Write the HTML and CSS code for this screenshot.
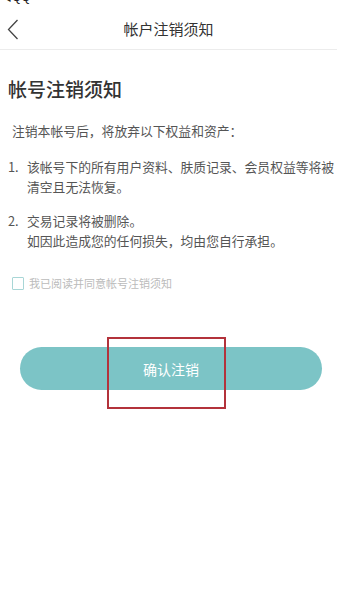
FILE: index.html
```html
<!DOCTYPE html>
<html lang="zh-CN">

<head>
    <meta charset="UTF-8">
    <meta name="viewport" content="width=device-width, initial-scale=1">
    <title>帐户注销须知</title>
    <link rel="stylesheet" href="styles.css">
</head>

<body>
    <div class="status-bar"><span class="status-back">◀QQ</span></div>

    <header class="nav">
        <a class="nav-back" href="#">
            <svg width="12" height="21" viewBox="0 0 12 21">
                <polyline points="10.5,1 1.5,10.5 10.5,20" fill="none" stroke="#444" stroke-width="1.3" />
            </svg>
        </a>
        <h1 class="nav-title">帐户注销须知</h1>
    </header>

    <main class="content">
        <h2 class="notice-title">帐号注销须知</h2>
        <p class="notice-intro">注销本帐号后，将放弃以下权益和资产：</p>

        <ol class="notice-list">
            <li class="notice-item">
                <span class="item-no">1.</span>
                <span class="item-text">该帐号下的所有用户资料、肤质记录、会员权益等将被清空且无法恢复。</span>
            </li>
            <li class="notice-item">
                <span class="item-no">2.</span>
                <span class="item-text">交易记录将被删除。<br>如因此造成您的任何损失，均由您自行承担。</span>
            </li>
        </ol>

        <label class="agree">
            <span class="agree-box"></span>
            <span class="agree-text">我已阅读并同意帐号注销须知</span>
        </label>

        <div class="action">
            <button class="btn-confirm">确认注销</button>
            <span class="highlight"></span>
        </div>
    </main>
</body>

</html>
```

FILE: styles.css
```css
* {
    box-sizing: border-box;
}

html, body {
    min-height: 100%;
}

body {
    margin: 0;
    background: #fff;
    font-family: "Noto Sans CJK SC", "Noto Sans", sans-serif;
    color: #555;
}

.status-bar {
    height: 5px;
    overflow: hidden;
}

.status-back {
    display: block;
    font-size: 12px;
    line-height: 12px;
    margin-top: -9px;
    color: #222;
    font-family: "Liberation Sans", sans-serif;
}

.nav {
    height: 45px;
    padding-top: 4px;
    display: flex;
    align-items: center;
    justify-content: center;
    position: relative;
    border-bottom: 1px solid #ececec;
}

.nav-back {
    position: absolute;
    left: 7px;
    top: 14px;
    display: flex;
}

.nav-title {
    margin: 0;
    font-size: 15px;
    font-weight: 400;
    color: #333;
    line-height: 20px;
}

.content {
    padding: 0 0 120px 8px;
}

.notice-title {
    margin: 26px 0 0;
    font-size: 19px;
    line-height: 26px;
    font-weight: 500;
    color: #333;
}

.notice-intro {
    margin: 19px 0 0;
    padding-left: 4px;
    font-size: 12.8px;
    line-height: 20px;
}

.notice-list {
    list-style: none;
    margin: 16px 0 0;
    padding: 0;
}

.notice-item {
    display: flex;
    font-size: 12.8px;
    line-height: 20px;
    margin-bottom: 14px;
}

.notice-item:last-child {
    margin-bottom: 0;
}

.item-no {
    width: 19px;
    flex: none;
}

.item-text {
    flex: 1;
}

.agree {
    display: flex;
    align-items: center;
    gap: 5px;
    margin-top: 25px;
    padding-left: 4px;
}

.agree-box {
    width: 12px;
    height: 13px;
    border: 1px solid #a8d6d6;
    border-radius: 1px;
}

.agree-text {
    font-size: 11px;
    line-height: 14px;
    color: #bbb;
}

.action {
    position: relative;
    margin: 57px 15px 0 12px;
}

.btn-confirm {
    display: block;
    width: 100%;
    height: 43px;
    border: none;
    border-radius: 22px;
    background: #7cc4c6;
    color: #fff;
    font-family: inherit;
    font-size: 14px;
}

.highlight {
    position: absolute;
    left: 87px;
    top: -10px;
    width: 119px;
    height: 72px;
    border: 2px solid #b3323b;
}
```
